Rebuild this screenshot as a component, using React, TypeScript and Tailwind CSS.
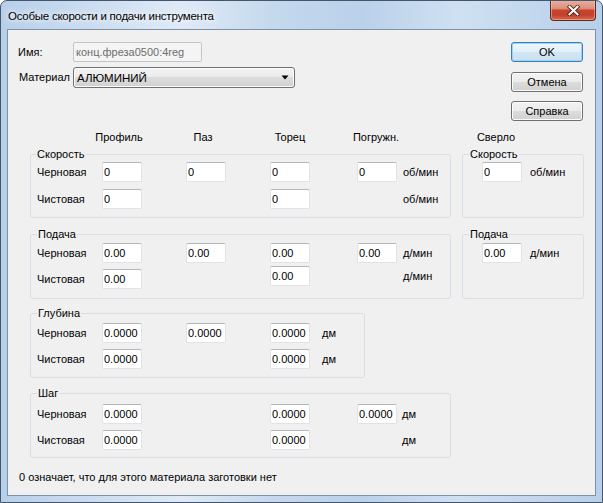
import React from "react";

type V = string | null;

const inputCls =
  "w-[40px] h-[20px] shrink-0 bg-white border border-[#dfe2e7] border-t-[#b3b7bd] rounded-[2px] pl-[1px] leading-[18px] text-black whitespace-nowrap overflow-hidden";

function Box({ v, cls = "" }: { v: V; cls?: string }) {
  if (v === null) return <div className={"w-[40px] h-[20px] shrink-0 " + cls} />;
  return <div className={inputCls + " " + cls}>{v}</div>;
}

const colMl = ["", "ml-[44px]", "ml-[44px]", "ml-[47px]"];

function Row({
  label,
  vals,
  unit,
  unitMl = "ml-[6px]",
  cls = "",
  offs = [],
}: {
  label: string;
  vals: V[];
  unit?: string;
  unitMl?: string;
  cls?: string;
  offs?: string[];
}) {
  return (
    <div className={"flex items-start pl-[6px] " + cls}>
      <div className={"w-[65px] shrink-0 h-[20px] flex items-center pt-[1px] " + (offs[0] ?? "")}>{label}</div>
      {vals.map((v, i) => (
        <Box key={i} v={v} cls={colMl[i] + " " + (offs[i + 1] ?? "")} />
      ))}
      {unit && (
        <div className={"h-[20px] flex items-center pt-[1px] whitespace-nowrap " + unitMl + " " + (offs[5] ?? "")}>
          {unit}
        </div>
      )}
    </div>
  );
}

function Group({
  label,
  cls,
  children,
  labelLeft = "left-[6px]",
}: {
  label: string;
  cls: string;
  children: React.ReactNode;
  labelLeft?: string;
}) {
  return (
    <div className={"relative shrink-0 border border-[#d5dfe5] rounded-[3px] " + cls}>
      <span className={"absolute top-[-8px] leading-[14px] px-[1px] bg-[#f0f0f0] whitespace-nowrap " + labelLeft}>
        {label}
      </span>
      {children}
    </div>
  );
}

function Btn({ children, def = false, cls = "" }: { children: React.ReactNode; def?: boolean; cls?: string }) {
  return (
    <div
      className={
        "w-[72px] h-[20px] rounded-[3px] border flex items-center justify-center leading-[14px] " +
        (def
          ? "border-[#3c7fb1] bg-[linear-gradient(180deg,#eef7fc_0%,#e1eff8_50%,#d2e7f5_50%,#c7e0f1_100%)] shadow-[inset_0_0_0_1px_#9fd3f3] "
          : "border-[#707070] bg-[linear-gradient(180deg,#f3f3f3_0%,#ebebeb_50%,#dddddd_50%,#d0d0d0_100%)] shadow-[inset_0_0_0_1px_#fcfcfc] ") +
        cls
      }
    >
      {children}
    </div>
  );
}

export default function App() {
  return (
    <div className="w-[603px] h-[503px] relative overflow-hidden rounded-t-[7px] border border-[#43566b] bg-[linear-gradient(90deg,#b7cfe9_0%,#cadcf0_14%,#dfeaf6_30%,#c5d9ee_45%,#bad1ea_60%,#cfe0f2_76%,#b8cfe9_100%)] font-['Liberation_Sans',Arial,sans-serif] text-[11px] text-black">
      {/* title bar */}
      <div className="h-[28px] flex items-center pl-[7px] pt-[1px]">
        <span className="text-[11.5px] tracking-[-0.25px] text-black leading-[16px] [text-shadow:0_0_8px_#ffffff,0_0_4px_#ffffff]">
          Особые скорости и подачи инструмента
        </span>
      </div>
      <div className="absolute right-[6px] top-[-1px] w-[46px] h-[21px] rounded-b-[4px] border border-[#5e2a20] border-t-0 bg-[linear-gradient(180deg,#eab1a2_0%,#dc8f7b_42%,#c7452c_52%,#c4412a_75%,#d9694c_100%)] shadow-[inset_0_0_0_1px_rgba(255,210,200,0.45)] flex items-center justify-center">
        <svg width="13" height="11" viewBox="0 0 13 11">
          <path d="M2.5 1.8 L10.5 9.2 M10.5 1.8 L2.5 9.2" stroke="#4a1b14" strokeWidth="3.8" strokeLinecap="square" />
          <path d="M2.5 1.8 L10.5 9.2 M10.5 1.8 L2.5 9.2" stroke="#ffffff" strokeWidth="2.1" strokeLinecap="square" />
        </svg>
      </div>

      {/* client area */}
      <div className="mx-[6px] h-[467px] border border-[#7d91a7] bg-[#f0f0f0] flex flex-col">
        {/* top section */}
        <div className="flex">
          <div className="flex flex-col pl-[10px] pt-[12px]">
            <div className="flex items-center h-[20px]">
              <div className="w-[55px] shrink-0">Имя:</div>
              <div className="w-[129px] h-[20px] border border-[#c2c6cb] bg-[#f4f4f4] rounded-[2px] pl-[2px] leading-[18px] text-[#6d6d6d]">
                конц.фреза0500:4reg
              </div>
            </div>
            <div className="flex items-center h-[21px] mt-[5px]">
              <div className="w-[55px] shrink-0 pl-[1px]">Материал</div>
              <div className="w-[222px] h-[21px] border border-[#707070] rounded-[3px] bg-[linear-gradient(180deg,#f3f3f3_0%,#ebebeb_50%,#dddddd_50%,#d0d0d0_100%)] shadow-[inset_0_0_0_1px_#fcfcfc] flex items-center pl-[3px] pr-[5px]">
                <span className="flex-1 text-[11.5px] leading-[14px]">АЛЮМИНИЙ</span>
                <svg width="8" height="5" viewBox="0 0 8 5">
                  <path d="M0.5 0.5 L7.5 0.5 L4 4.5 Z" fill="#000" />
                </svg>
              </div>
            </div>
          </div>
          <div className="ml-auto mr-[12px] pt-[12px] flex flex-col">
            <Btn def>OK</Btn>
            <Btn cls="mt-[10px]">Отмена</Btn>
            <Btn cls="mt-[9px]">Справка</Btn>
          </div>
        </div>

        {/* column headers */}
        <div className="flex mt-[9px] h-[14px] leading-[14px]">
          <div className="w-[80px] text-center ml-[71px]">Профиль</div>
          <div className="w-[80px] text-center ml-[4px]">Паз</div>
          <div className="w-[80px] text-center ml-[7px]">Торец</div>
          <div className="w-[80px] text-center ml-[6px]">Погружн.</div>
          <div className="w-[80px] text-center ml-[40px]">Сверло</div>
        </div>

        {/* groups */}
        <div className="flex ml-[22px] mt-[10px]">
          <div className="w-[421px] flex flex-col">
            <Group label="Скорость" cls="h-[64px] pt-[7px]" labelLeft="left-[5px]">
              <Row label="Черновая" vals={["0", "0", "0", "0"]} unit="об/мин" />
              <Row label="Чистовая" vals={["0", null, "0", null]} unit="об/мин" cls="mt-[7px]" />
            </Group>
            <Group label="Подача" cls="h-[65px] pt-[8px] mt-[16px]">
              <Row label="Черновая" vals={["0.00", "0.00", "0.00", "0.00"]} unit="д/мин" />
              <Row
                label="Чистовая"
                vals={["0.00", null, "0.00", null]}
                unit="д/мин"
                cls="mt-[3px]"
                offs={["mt-[3px]", "mt-[3px]", "", "", "", ""]}
              />
            </Group>
            <Group label="Глубина" cls="h-[65px] w-[335px] pt-[9px] mt-[14px]">
              <Row label="Черновая" vals={["0.0000", "0.0000", "0.0000"]} unit="дм" unitMl="ml-[12px]" />
              <Row label="Чистовая" vals={["0.0000", null, "0.0000"]} unit="дм" unitMl="ml-[12px]" cls="mt-[6px]" />
            </Group>
            <Group label="Шаг" cls="h-[65px] pt-[10px] mt-[15px]">
              <Row label="Черновая" vals={["0.0000", null, "0.0000", "0.0000"]} unit="дм" unitMl="ml-[5px]" />
              <Row label="Чистовая" vals={["0.0000", null, "0.0000", null]} unit="дм" unitMl="ml-[5px]" cls="mt-[6px]" />
            </Group>
          </div>
          <div className="w-[122px] ml-[11px] flex flex-col">
            <Group label="Скорость" cls="h-[64px] pt-[7px]">
              <div className="flex items-center pl-[19px]">
                <Box v="0" />
                <div className="ml-[8px] pt-[1px] whitespace-nowrap">об/мин</div>
              </div>
            </Group>
            <Group label="Подача" cls="h-[65px] pt-[8px] mt-[16px]">
              <div className="flex items-center pl-[19px]">
                <Box v="0.00" />
                <div className="ml-[8px] pt-[1px] whitespace-nowrap">д/мин</div>
              </div>
            </Group>
          </div>
        </div>

        <div className="mt-[12px] pl-[11px] leading-[14px]">0 означает, что для этого материала заготовки нет</div>
      </div>
    </div>
  );
}
